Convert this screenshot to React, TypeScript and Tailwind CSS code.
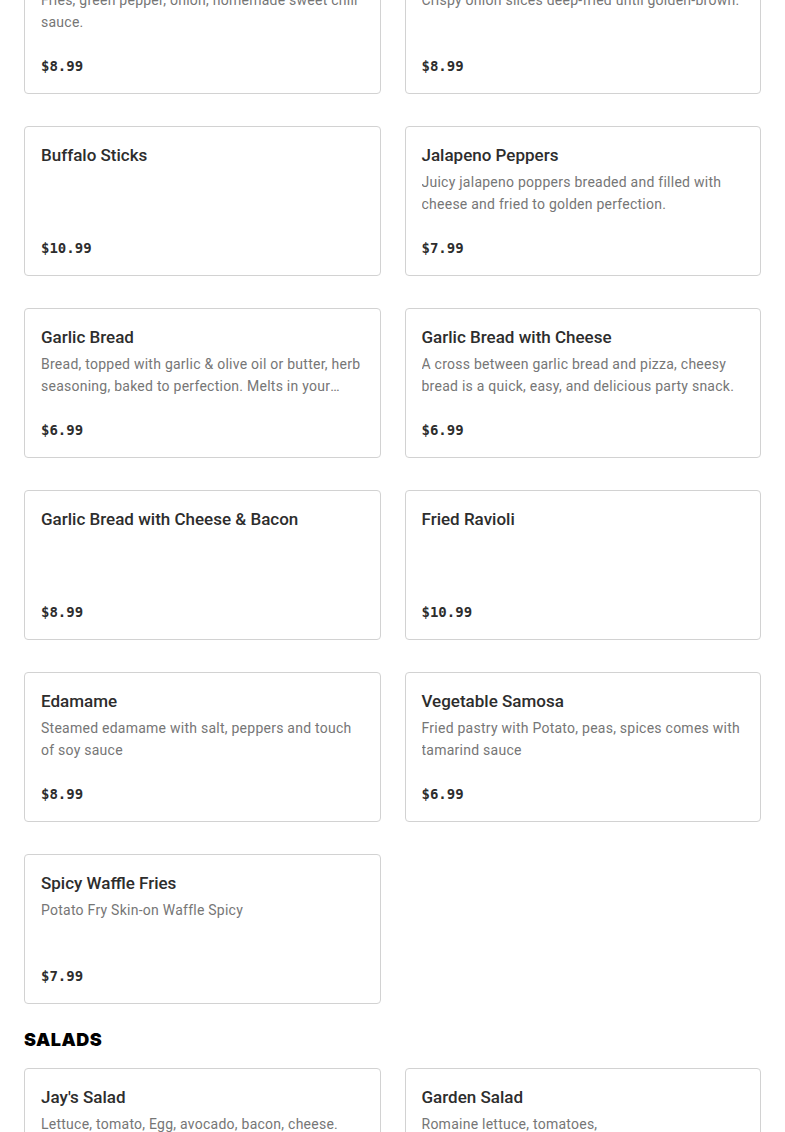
type Item = { name: string; desc?: string; price: string };

const appetizers: Item[] = [
  { name: 'Chili Fries', desc: 'Fries, green pepper, onion, homemade sweet chili sauce.', price: '$8.99' },
  { name: 'Onion Rings', desc: 'Crispy onion slices deep-fried until golden-brown.', price: '$8.99' },
  { name: 'Buffalo Sticks', price: '$10.99' },
  {
    name: 'Jalapeno Peppers',
    desc: 'Juicy jalapeno poppers breaded and filled with cheese and fried to golden perfection.',
    price: '$7.99',
  },
  {
    name: 'Garlic Bread',
    desc: 'Bread, topped with garlic & olive oil or butter, herb seasoning, baked to perfection. Melts in your mouth with every bite.',
    price: '$6.99',
  },
  {
    name: 'Garlic Bread with Cheese',
    desc: 'A cross between garlic bread and pizza, cheesy bread is a quick, easy, and delicious party snack.',
    price: '$6.99',
  },
  { name: 'Garlic Bread with Cheese & Bacon', price: '$8.99' },
  { name: 'Fried Ravioli', price: '$10.99' },
  { name: 'Edamame', desc: 'Steamed edamame with salt, peppers and touch of soy sauce', price: '$8.99' },
  {
    name: 'Vegetable Samosa',
    desc: 'Fried pastry with Potato, peas, spices comes with tamarind sauce',
    price: '$6.99',
  },
  { name: 'Spicy Waffle Fries', desc: 'Potato Fry Skin-on Waffle Spicy', price: '$7.99' },
];

const salads: Item[] = [
  { name: "Jay's Salad", desc: 'Lettuce, tomato, Egg, avocado, bacon, cheese.', price: '$11.99' },
  { name: 'Garden Salad', desc: 'Romaine lettuce, tomatoes, cucumbers/onions/carrots/croutons', price: '$8.99' },
];

function MenuCard({ item }: { item: Item }) {
  return (
    <div className="flex h-[150px] flex-col rounded-[4px] border border-[#d2d2d2] bg-white p-4">
      <h3 className="text-[17px] leading-6 font-medium text-[#2d2d2d]">{item.name}</h3>
      {item.desc && (
        <p className="mt-1 line-clamp-2 text-[14px] leading-[22px] tracking-[0.25px] text-[#767676]">
          {item.desc}
        </p>
      )}
      <p className="mt-auto translate-y-px font-['DejaVu_Sans_Mono',monospace] text-[14px] leading-6 font-bold text-[#2d2d2d]">
        {item.price}
      </p>
    </div>
  );
}

export default function App() {
  return (
    <div className="h-[1132px] overflow-hidden bg-white font-['Roboto','Noto_Sans',sans-serif]">
      <div className="-mt-[56px] px-6">
        <div className="grid grid-cols-2 gap-x-6 gap-y-8">
          {appetizers.map((it) => (
            <MenuCard key={it.name} item={it} />
          ))}
        </div>

        <h2 className="mt-6 mb-4 font-['Inter',sans-serif] text-[18px] leading-6 font-black tracking-[0.5px] text-black">
          SALADS
        </h2>
        <div className="grid grid-cols-2 gap-x-6 gap-y-8">
          {salads.map((it) => (
            <MenuCard key={it.name} item={it} />
          ))}
        </div>
      </div>
    </div>
  );
}
